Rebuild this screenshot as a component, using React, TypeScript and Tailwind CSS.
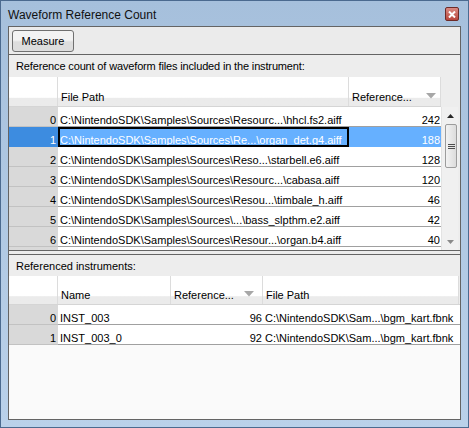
import React from "react";

const font = { fontFamily: '"Liberation Sans", Arial, sans-serif' };

const files = [
  { n: 0, path: "C:\\NintendoSDK\\Samples\\Sources\\Resourc...\\hhcl.fs2.aiff", count: 242 },
  { n: 1, path: "C:\\NintendoSDK\\Samples\\Sources\\Re...\\organ_det.g4.aiff", count: 188 },
  { n: 2, path: "C:\\NintendoSDK\\Samples\\Sources\\Reso...\\starbell.e6.aiff", count: 128 },
  { n: 3, path: "C:\\NintendoSDK\\Samples\\Sources\\Resourc...\\cabasa.aiff", count: 120 },
  { n: 4, path: "C:\\NintendoSDK\\Samples\\Sources\\Resou...\\timbale_h.aiff", count: 46 },
  { n: 5, path: "C:\\NintendoSDK\\Samples\\Sources\\...\\bass_slpthm.e2.aiff", count: 42 },
  { n: 6, path: "C:\\NintendoSDK\\Samples\\Sources\\Resour...\\organ.b4.aiff", count: 40 },
];

const instruments = [
  { n: 0, name: "INST_003", count: 96, path: "C:\\NintendoSDK\\Sam...\\bgm_kart.fbnk" },
  { n: 1, name: "INST_003_0", count: 92, path: "C:\\NintendoSDK\\Sam...\\bgm_kart.fbnk" },
];

function SortArrow() {
  return (
    <svg width="10" height="6" viewBox="0 0 10 6" className="shrink-0">
      <path d="M0 0h10L5 5.5z" fill="#a7a7a7" />
    </svg>
  );
}

function HeadCell({ w, children, grow }: { w?: string; children?: React.ReactNode; grow?: boolean }) {
  return (
    <div
      className={`${w ?? ""} ${grow ? "flex-1" : "shrink-0"} h-full flex items-end pb-[1px] pl-[3px] pr-[4px] border-r border-[#dcdcdc] bg-gradient-to-b from-white from-[70%] to-[#ebebeb] to-[74%]`}
    >
      {children}
    </div>
  );
}

function ScrollBar() {
  return (
    <div className="w-[17px] h-full shrink-0 bg-[#f0f0f0] border-l border-[#e3e3e3] flex flex-col items-center">
      <div className="h-[17px] w-full flex items-center justify-center">
        <svg width="7" height="4" viewBox="0 0 7 4">
          <path d="M0 4L3.5 0L7 4z" fill="#262626" />
        </svg>
      </div>
      <div className="ml-[2px] w-[12px] h-[44px] rounded-[2px] border border-[#9c9c9c] bg-gradient-to-r from-[#f2f2f2] to-[#dcdcdc] flex flex-col items-center justify-center gap-[1px]">
        <div className="w-[7px] h-[1px] bg-[#4d4d4d]" />
        <div className="w-[7px] h-[1px] bg-[#4d4d4d]" />
        <div className="w-[7px] h-[1px] bg-[#4d4d4d]" />
      </div>
      <div className="flex-1" />
      <div className="h-[17px] w-full flex items-center justify-center">
        <svg width="7" height="4" viewBox="0 0 7 4">
          <path d="M0 0L3.5 4L7 0z" fill="#8a8a8a" />
        </svg>
      </div>
    </div>
  );
}

const cell = "border-b pt-[7px] leading-[12px] whitespace-nowrap overflow-hidden";

export default function App() {
  return (
    <div
      className="w-[469px] h-[428px] overflow-hidden border border-[#4b6a8f] bg-gradient-to-b from-[#a6c0dc] to-[#bad1ea] flex flex-col text-[11px] text-black"
      style={font}
    >
      {/* Title bar */}
      <div className="h-[25px] shrink-0 flex items-center pl-[7px] pr-[9px] pt-[3px]">
        <span className="text-[12px] text-[#111] flex-1">Waveform Reference Count</span>
        <div className="w-[14px] h-[14px] -mt-[2px] rounded-[2px] border border-[#6d2b28] bg-gradient-to-b from-[#d98a83] to-[#b8443c] flex items-center justify-center">
          <svg width="8" height="7" viewBox="0 0 8 7">
            <path d="M1 0.5L7 6.5M7 0.5L1 6.5" stroke="white" strokeWidth="2" />
          </svg>
        </div>
      </div>

      {/* Client area */}
      <div className="flex-1 mx-[7px] mb-[7px] border border-[#646464] bg-[#ebebeb] flex flex-col">
        {/* Toolbar */}
        <div className="h-[27px] shrink-0 pl-[3px] pt-[3px]">
          <button className="w-[62px] h-[22px] rounded-[3px] border border-[#707070] bg-gradient-to-b from-[#f3f3f3] from-[45%] to-[#dddddd] to-[55%] text-[11px] text-black">
            Measure
          </button>
        </div>

        {/* Panel 1 */}
        <div className="h-[197px] shrink-0 border-t border-b border-[#646464] flex flex-col bg-[#ededed]">
          <div className="h-[22px] shrink-0 flex items-center pl-[7px] pt-[1px] tracking-[-0.15px]">
            Reference count of waveform files included in the instrument:
          </div>
          <div className="flex-1 flex overflow-hidden">
            <div className="w-[432px] shrink-0 flex flex-col">
              <div className="h-[30px] shrink-0 flex border-b border-[#d5d5d5]">
                <HeadCell w="w-[49px]" />
                <HeadCell w="w-[291px]">File Path</HeadCell>
                <HeadCell grow>
                  <span className="flex-1">Reference...</span>
                  <span className="mb-[6px]">
                    <SortArrow />
                  </span>
                </HeadCell>
              </div>
              {files.map((f) => {
                const sel = f.n === 1;
                return (
                  <div key={f.n} className="h-[20px] shrink-0 flex">
                    <div
                      className={`w-[49px] shrink-0 text-right pr-[2px] ${cell} ${
                        sel ? "bg-[#3d8ce0] border-[#3d8ce0] text-white" : "bg-[#d9d9d9] border-[#c2c2c2]"
                      }`}
                    >
                      {f.n}
                    </div>
                    <div
                      className={`w-[291px] shrink-0 pl-[2px] ${cell} ${
                        sel
                          ? "bg-[#66b0ff] border-[#66b0ff] text-white outline-2 outline-black -outline-offset-2"
                          : "bg-white border-[#a0a0a0]"
                      }`}
                    >
                      {f.path}
                    </div>
                    <div
                      className={`flex-1 text-right pr-[1px] ${cell} ${
                        sel ? "bg-[#66b0ff] border-[#66b0ff] text-white" : "bg-white border-[#a0a0a0]"
                      }`}
                    >
                      {f.count}
                    </div>
                  </div>
                );
              })}
              <div className="flex-1 flex">
                <div className="w-[49px] bg-[#d9d9d9]" />
                <div className="flex-1 bg-white" />
              </div>
            </div>
            <div className="flex flex-col">
              <div className="h-[30px] shrink-0" />
              <div className="flex-1">
                <ScrollBar />
              </div>
            </div>
          </div>
        </div>

        {/* Splitter */}
        <div className="h-[3px] shrink-0" />

        {/* Panel 2 */}
        <div className="flex-1 border-t border-[#646464] flex flex-col bg-[#ededed]">
          <div className="h-[21px] shrink-0 flex items-center pl-[7px] pt-[1px]">Referenced instruments:</div>
          <div className="h-[29px] shrink-0 flex border-b border-[#d5d5d5]">
            <HeadCell w="w-[49px]" />
            <HeadCell w="w-[113px]">Name</HeadCell>
            <HeadCell w="w-[92px]">
              <span className="flex-1">Reference...</span>
              <span className="mb-[6px] mr-[4px]">
                <SortArrow />
              </span>
            </HeadCell>
            <HeadCell w="w-[196px]">File Path</HeadCell>
          </div>
          {instruments.map((r) => (
            <div key={r.n} className="h-[20px] shrink-0 flex">
              <div className={`w-[49px] shrink-0 border-[#c2c2c2] bg-[#d9d9d9] text-right pr-[2px] ${cell}`}>{r.n}</div>
              <div className={`w-[113px] shrink-0 border-[#a0a0a0] bg-white pl-[2px] ${cell}`}>{r.name}</div>
              <div className={`w-[92px] shrink-0 border-[#a0a0a0] bg-white text-right pr-[1px] ${cell}`}>{r.count}</div>
              <div className={`w-[197px] shrink-0 border-[#a0a0a0] bg-white pl-[2px] ${cell}`}>{r.path}</div>
            </div>
          ))}
          <div className="flex-1 bg-[#fafafa]" />
        </div>
      </div>
    </div>
  );
}
